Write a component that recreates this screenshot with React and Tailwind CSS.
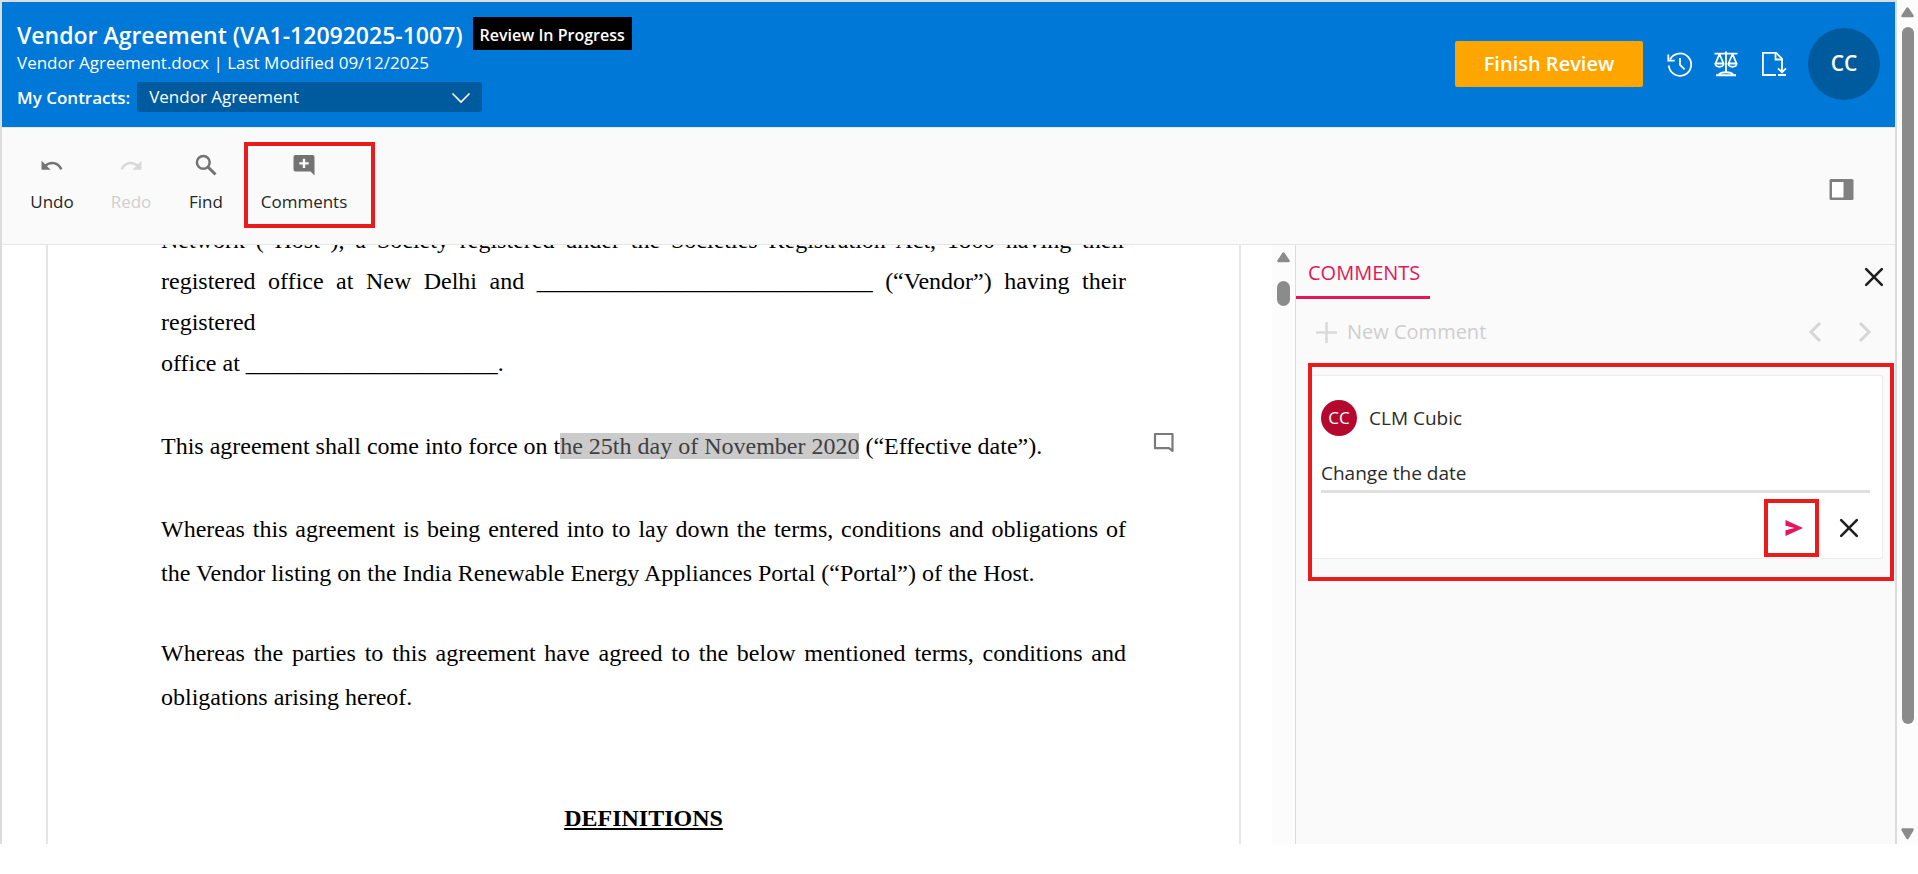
import React from "react";

function ArrowMark({ down = false }) {
  return (
    <svg width="15" height="12" viewBox="0 0 15 12" aria-hidden="true" className="shrink-0">
      <path
        d={down ? "M2.5 1.5h10L7.5 10z" : "M2.5 10h10L7.5 2.5z"}
        fill="#8b8b8b"
        stroke="#8b8b8b"
        strokeWidth="2.5"
        strokeLinejoin="round"
      />
    </svg>
  );
}

function CloseIcon() {
  return (
    <svg width="20" height="20" viewBox="0 0 20 20" aria-hidden="true">
      <path d="M2.2 2.2 17.8 17.8M17.8 2.2 2.2 17.8" stroke="#1f1f1f" strokeWidth="2.6" strokeLinecap="round" fill="none" />
    </svg>
  );
}

function UndoIcon() {
  return (
    <svg width="22" height="22" viewBox="1.5 0.5 21.5 21.5" aria-hidden="true">
      <path
        d="M12.5 8c-2.65 0-5.05.99-6.9 2.6L2 7v9h9l-3.62-3.62c1.39-1.16 3.16-1.88 5.12-1.88 3.54 0 6.55 2.31 7.6 5.5l2.37-.78C21.08 11.03 17.15 8 12.5 8z"
        fill="#737373"
      />
    </svg>
  );
}

function RedoIcon() {
  return (
    <svg width="22" height="22" viewBox="1 0.5 21.5 21.5" aria-hidden="true">
      <path
        d="M18.4 10.6C16.55 8.99 14.15 8 11.5 8c-4.65 0-8.58 3.03-9.96 7.22L3.9 16c1.05-3.19 4.05-5.5 7.6-5.5 1.95 0 3.73.72 5.12 1.88L13 16h9V7l-3.6 3.6z"
        fill="#d9d9d9"
      />
    </svg>
  );
}

function FindIcon() {
  return (
    <svg width="22" height="22" viewBox="0 0 22 22" aria-hidden="true">
      <circle cx="8.300" cy="8.300" r="6.400" fill="none" stroke="#737373" strokeWidth="2.500" />
      <path d="M13 13l7.500 7.500" stroke="#737373" strokeWidth="3" fill="none" />
    </svg>
  );
}

function AddCommentIcon() {
  return (
    <svg width="22" height="22" viewBox="0 0 22 22" aria-hidden="true">
      <path
        fillRule="evenodd"
        d="M2.500 1h17a2 2 0 0 1 2 2v18.500l-4-4h-15a2 2 0 0 1-2-2V3a2 2 0 0 1 2-2zM9.800 4.800v3.400H6.300v2.300h3.500v3.500h2.400v-3.500h3.500V8.200h-3.500V4.800z"
        fill="#737373"
      />
    </svg>
  );
}

function ToolButton({ icon, label, disabled = false, className }) {
  return (
    <button
      type="button"
      disabled={disabled}
      className={`flex flex-col items-center gap-[14px] text-[17px] leading-6 ${disabled ? "text-[#cfcfcf]" : "text-[#262626]"} ${className}`}
    >
      {icon}
      <span>{label}</span>
    </button>
  );
}

function Header() {
  return (
    <header className="flex h-[125px] shrink-0 items-start justify-between bg-[#0078d7] pl-[15px] pr-[15px] text-white">
      <div>
        <div className="flex items-start gap-[10px] pt-[15px]">
          <h1 className="pt-[2px] text-[23px] font-semibold leading-[33px]">Vendor Agreement (VA1-12092025-1007)</h1>
          <span className="flex h-[33px] items-center bg-black px-[7px] pt-[2px] text-[16px] font-semibold">Review In Progress</span>
        </div>
        <p className="text-[17px] leading-[22px]">Vendor Agreement.docx | Last Modified 09/12/2025</p>
        <div className="mt-2 flex items-center gap-[7px]">
          <label htmlFor="contract" className="pt-[2px] text-[17px] font-semibold">
            My Contracts:
          </label>
          <div className="relative">
            <select
              id="contract"
              className="h-[30px] w-[345px] appearance-none rounded-[3px] bg-[#005a9e] pl-3 text-[17px] text-white"
            >
              <option>Vendor Agreement</option>
            </select>
            <svg width="20" height="12" viewBox="0 0 20 12" aria-hidden="true" className="pointer-events-none absolute right-[11px] top-[10px]">
              <path d="M1.500 1.500 10 10l8.500-8.500" stroke="#fff" strokeWidth="1.600" fill="none" />
            </svg>
          </div>
        </div>
      </div>

      <div className="flex items-center pt-[26px]">
        <button type="button" className="mr-[23px] h-[46px] w-[188px] rounded-[2px] bg-[#ffa500] text-[20px] font-semibold">
          Finish Review
        </button>
        <button type="button" aria-label="Version history" className="mr-[18px]">
          <svg width="28" height="28" viewBox="0 0 28 28" fill="none" stroke="#fff" strokeWidth="1.800" aria-hidden="true">
            <path d="M4 9.500A11.200 11.200 0 1 1 2.800 15.500" />
            <path d="M2.300 4.500v6.200h6.400" />
            <path d="M14 8v6.800l4.600 4.600" />
          </svg>
        </button>
        <button type="button" aria-label="Compare" className="mr-5">
          <svg width="28" height="28" viewBox="0 0 28 28" fill="none" stroke="#fff" strokeWidth="1.800" aria-hidden="true">
            <path d="M2.500 3.700h23M14 1.500V23" />
            <path d="M7.500 4 3.500 13.500h8zM20.500 4l-4 9.500h8z" strokeLinejoin="round" />
            <path d="M3.200 13.500c.3 2.600 2 3.300 4.300 3.300s4-.7 4.300-3.300M16.200 13.500c.3 2.600 2 3.300 4.300 3.300s4-.7 4.300-3.300" />
            <path d="M4 25.200h20M6.500 25c1.500-2 4.300-2.800 7.500-2.800s6 .8 7.500 2.800" strokeWidth="2" />
          </svg>
        </button>
        <button type="button" aria-label="Download document" className="mr-5">
          <svg width="28" height="28" viewBox="0 0 28 28" fill="none" stroke="#fff" strokeWidth="1.800" aria-hidden="true">
            <path d="M16 25H2.900V2.900h13.300l5.900 5.900V13" />
            <path d="M15.500 3v6.500H22" />
            <path d="M22 12.500v9.500M18 18.300l4 4 4-4M18 25h8" />
          </svg>
        </button>
        <button type="button" aria-label="Account" className="flex size-[72px] items-center justify-center rounded-full bg-[#005a9e] text-[21px] font-semibold">
          CC
        </button>
      </div>
    </header>
  );
}

function Toolbar() {
  return (
    <div className="flex h-[118px] shrink-0 items-start justify-between border-y border-[#e6e6e6] bg-[#fafafa] pl-[18px] pr-[41px]">
      <div className="flex items-start">
        <ToolButton icon={<UndoIcon />} label="Undo" className="mt-[26px] w-[64px]" />
        <ToolButton icon={<RedoIcon />} label="Redo" disabled className="ml-[15px] mt-[26px] w-[64px]" />
        <ToolButton icon={<FindIcon />} label="Find" className="ml-[13px] mt-[26px] w-[60px]" />
        <div className="ml-2 mt-[14px] h-[86px] w-[131px] border-4 border-[#e81c1c]">
          <ToolButton icon={<AddCommentIcon />} label="Comments" className="ml-2 mt-[8px] w-[96px]" />
        </div>
      </div>
      <button type="button" aria-label="Toggle side pane" className="mt-[50px]">
        <svg width="25" height="23" viewBox="0 0 25 23" aria-hidden="true">
          <rect x=".5" y="1" width="24" height="21" rx="1.500" fill="#808080" />
          <path d="M3 4h11.500v15.500H3z" fill="#fff" />
        </svg>
      </button>
    </div>
  );
}

function DocumentView() {
  return (
    <main className="flex min-w-0 flex-1 overflow-hidden bg-white">
      <article className="relative ml-[44px] mr-[31px] min-w-0 flex-1 border-x-2 border-[#e6e6e6] px-[113px] font-['Liberation_Serif',serif] text-[24px] text-black">
        <p className="-mt-[25px] text-justify leading-[41px]">
          Network (“Host”), a Society registered under the Societies Registration Act, 1860 having their registered office
          at New Delhi and ____________________________ (“Vendor”) having their registered
          <br />
          office at _____________________.
        </p>
        <div className="relative mt-[42px]">
          <p className="leading-[41px]">
            This agreement shall come into force on t
            <span className="bg-[#cbcbcb] text-[#404040]">he 25th day of November 2020</span> (“Effective date”).
          </p>
          <button type="button" aria-label="Show comment" className="absolute -right-[49px] top-[6px]">
            <svg width="22" height="22" viewBox="0 0 22 22" aria-hidden="true">
              <path d="M2 2h17.500v17L16 16.200H2z" fill="none" stroke="#7a7a7a" strokeWidth="2.200" strokeLinejoin="round" />
            </svg>
          </button>
        </div>
        <p className="mt-10 text-justify leading-[44px]">
          Whereas this agreement is being entered into to lay down the terms, conditions and obligations of the Vendor
          listing on the India Renewable Energy Appliances Portal (“Portal”) of the Host.
        </p>
        <p className="mt-9 text-justify leading-[44px]">
          Whereas the parties to this agreement have agreed to the below mentioned terms, conditions and obligations
          arising hereof.
        </p>
        <h2 className="mt-[79px] text-center font-bold leading-[41px] underline decoration-2 underline-offset-2">DEFINITIONS</h2>
      </article>
      <div className="flex w-[23px] shrink-0 flex-col items-center bg-[#fcfcfc] pt-1.5">
        <ArrowMark />
        <div className="mt-[18px] h-[25px] w-[13px] rounded-full bg-[#8b8b8b]" />
      </div>
    </main>
  );
}

function CommentsPane() {
  return (
    <aside className="w-[600px] shrink-0 border-l border-[#dcdcdc] bg-[#fafafa]">
      <div className="flex items-start justify-between pr-[11px]">
        <h2 className="h-[54px] w-[134px] border-b-[3px] border-[#e3165b] pl-3 pt-[14px] text-[20px] leading-7 text-[#e3165b]">
          COMMENTS
        </h2>
        <button type="button" aria-label="Close comments" className="mt-[22px]">
          <CloseIcon />
        </button>
      </div>
      <div className="mt-[17px] flex items-center justify-between pl-5 pr-[23px]">
        <button type="button" disabled className="flex items-center gap-[10px] text-[20px] leading-8 text-[#cecece]">
          <svg width="21" height="21" viewBox="0 0 21 21" aria-hidden="true">
            <path d="M10.500 0v21M0 10.500h21" stroke="#dadada" strokeWidth="2.600" />
          </svg>
          New Comment
        </button>
        <div className="flex gap-9">
          <button type="button" disabled aria-label="Previous comment">
            <svg width="14" height="20" viewBox="0 0 14 20" aria-hidden="true">
              <path d="M12 1 3 10l9 9" stroke="#d6d6d6" strokeWidth="3" fill="none" />
            </svg>
          </button>
          <button type="button" disabled aria-label="Next comment">
            <svg width="14" height="20" viewBox="0 0 14 20" aria-hidden="true">
              <path d="M2 1l9 9-9 9" stroke="#d6d6d6" strokeWidth="3" fill="none" />
            </svg>
          </button>
        </div>
      </div>
      <div className="ml-3 mr-[1px] mt-[15px] border-4 border-[#e81c1c] pb-[18px] pr-[7px] pt-2">
        <form className="h-[184px] rounded-r-[3px] border border-l-0 border-[#ececec] bg-white pl-[9px] pr-3 pt-6">
          <div className="flex items-center gap-3">
            <span className="flex size-9 items-center justify-center rounded-full bg-[#b5082e] text-[17px] text-white">CC</span>
            <span className="text-[19px] leading-7 text-[#2b2b2b]">CLM Cubic</span>
          </div>
          <input
            aria-label="Comment text"
            defaultValue="Change the date"
            className="mt-[21px] h-9 w-full border-b-[3px] border-[#e0e0e0] bg-transparent pb-[2px] text-[19px] text-[#2b2b2b] outline-none"
          />
          <div className="mt-[6px] flex justify-end gap-5 pr-[11px]">
            <button type="submit" aria-label="Post comment" className="flex h-[58px] w-[55px] items-center justify-center border-4 border-[#e81c1c]">
              <svg width="18" height="16" viewBox="0 0 18 16" aria-hidden="true" className="ml-1">
                <path d="M.5 0 18 8 .5 16v-5.800L9.500 8 .5 5.800z" fill="#e3165b" />
              </svg>
            </button>
            <button type="button" aria-label="Discard comment">
              <CloseIcon />
            </button>
          </div>
        </form>
      </div>
    </aside>
  );
}

export default function App() {
  return (
    <div className="flex h-screen bg-white pb-[30px] font-['Open_Sans','Noto_Sans',sans-serif]">
      <div className="flex min-w-0 flex-1 flex-col border-x-2 border-t-2 border-[#dcdcdc]">
        <Header />
        <Toolbar />
        <div className="flex min-h-0 flex-1">
          <DocumentView />
          <CommentsPane />
        </div>
      </div>
      <div className="flex w-[21px] shrink-0 flex-col items-center justify-between bg-[#fcfcfc] pb-1 pt-1.5">
        <ArrowMark />
        <div className="mt-[9px] min-h-0 flex-1">
          <div className="h-[87%] w-3 rounded-full bg-[#8b8b8b]" />
        </div>
        <ArrowMark down />
      </div>
    </div>
  );
}
